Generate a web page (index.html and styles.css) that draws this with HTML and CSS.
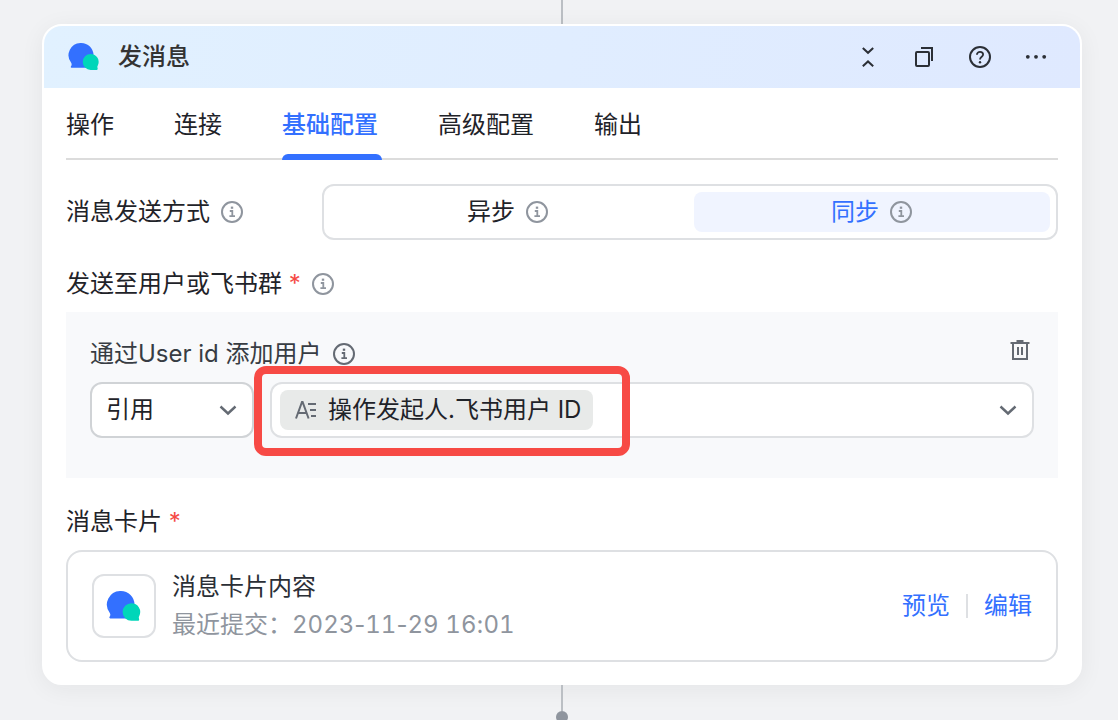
FILE: index.html
```html
<!DOCTYPE html>
<html lang="zh-CN">

<head>
  <meta charset="UTF-8">
  <meta name="viewport" content="width=device-width, initial-scale=1">
  <title>发消息</title>
  <link rel="stylesheet" href="styles.css">
</head>

<body>
  <!-- shared icons -->
  <svg class="sprite" aria-hidden="true">
    <symbol id="logo" viewBox="0 0 32 28">
      <path fill="#3370ff" d="M13.2 0A12.3 12.3 0 0 1 25.5 12.3V24.8H3.6C2.7 24.8 2.5 24 3 23.3C3.7 22.4 3.9 21.4 3.3 20A12.3 12.3 0 0 1 13.2 0Z" />
      <path fill="#00d6b9" d="M22.7 11A8 8 0 0 1 29.8 22.6C29.2 23.7 29.3 24.3 29.6 25.2C29.9 26.1 29.5 26.9 28.7 26.9H22.7A7.9 7.9 0 0 1 22.7 11Z" />
    </symbol>
    <symbol id="info" viewBox="0 0 24 24">
      <g fill="none" stroke="currentColor" stroke-width="2">
        <circle cx="12" cy="12" r="10" />
        <path d="M9.8 11H12.3V16.2M9.4 16.2H15" stroke-width="1.8" />
      </g>
      <rect x="10.8" y="6.6" width="2.4" height="2.2" fill="currentColor" />
    </symbol>
    <symbol id="chevron" viewBox="0 0 24 24">
      <path d="M4.5 8.5L12 15.5L19.5 8.5" fill="none" stroke="currentColor" stroke-width="2.4" />
    </symbol>
  </svg>

  <main class="canvas">
    <div class="line line-in"></div>
    <section class="node">
      <header class="node-header">
        <svg class="logo"><use href="#logo" /></svg>
        <h1>发消息</h1>
        <div class="actions">
          <button type="button" aria-label="收起">
            <svg viewBox="0 0 24 24" fill="none" stroke="currentColor" stroke-width="2">
              <path d="M6.8 3L12 7.8L17.2 3M6.8 21.2L12 16.4L17.2 21.2" />
            </svg>
          </button>
          <button type="button" aria-label="复制">
            <svg viewBox="0 0 24 24" fill="none" stroke="currentColor" stroke-width="2">
              <rect x="4" y="7" width="13" height="14" rx="1" />
              <path d="M9 3H20V16" />
            </svg>
          </button>
          <button type="button" aria-label="帮助">
            <svg viewBox="0 0 24 24" fill="none" stroke="currentColor" stroke-width="2">
              <circle cx="12" cy="12" r="10" />
              <path d="M8.9 9.8C8.9 5.8 15.1 6 15.1 9.6C15.1 11.8 12 11.8 12 14.6" stroke-width="1.8" />
              <circle cx="12" cy="17.2" r="1.2" fill="currentColor" stroke="none" />
            </svg>
          </button>
          <button type="button" aria-label="更多">
            <svg viewBox="0 0 24 24" fill="currentColor">
              <circle cx="3.8" cy="11.8" r="1.9" />
              <circle cx="12" cy="11.8" r="1.9" />
              <circle cx="20.2" cy="11.8" r="1.9" />
            </svg>
          </button>
        </div>
      </header>

      <div class="node-body">
        <div class="tabs" role="tablist">
          <button type="button" role="tab">操作</button>
          <button type="button" role="tab">连接</button>
          <button type="button" role="tab" class="active" aria-selected="true">基础配置</button>
          <button type="button" role="tab">高级配置</button>
          <button type="button" role="tab">输出</button>
        </div>

        <div class="mode-row">
          <div class="field-label" id="mode-label">消息发送方式 <svg class="icon"><use href="#info" /></svg></div>
          <div class="segmented" role="radiogroup" aria-labelledby="mode-label">
            <input type="radio" name="mode" id="mode-async">
            <label for="mode-async">异步 <svg class="icon"><use href="#info" /></svg></label>
            <input type="radio" name="mode" id="mode-sync" checked>
            <label for="mode-sync">同步 <svg class="icon"><use href="#info" /></svg></label>
          </div>
        </div>

        <div class="field-label">
          <span>发送至用户或飞书群 <span class="required">*</span></span>
          <svg class="icon"><use href="#info" /></svg>
        </div>
        <div class="panel">
          <div class="panel-top">
            <label class="panel-label" for="source">通过User id 添加用户 <svg class="icon"><use href="#info" /></svg></label>
            <button type="button" class="delete" aria-label="删除">
              <svg viewBox="0 0 24 24" fill="none" stroke="currentColor" stroke-width="2">
                <path d="M2.5 5H21.5M5 5V21H19V5M10 9V17M14 9V17" />
                <path d="M8.5 3.2H15.5" stroke-width="2.4" />
              </svg>
            </button>
          </div>
          <div class="panel-inputs">
            <div class="select">
              <select id="source">
                <option>引用</option>
              </select>
              <svg class="chevron"><use href="#chevron" /></svg>
            </div>
            <div class="value">
              <button type="button" class="picker" aria-haspopup="listbox">
                <span class="tag">
                  <svg viewBox="0 0 24 24" fill="none" stroke="currentColor" stroke-width="2">
                    <path d="M2 20.5L8 4H8.6L14.6 20.5M4.2 15H12.4M14 6H22M16 12H22M17 18H22" />
                  </svg>
                  操作发起人.飞书用户 ID
                </span>
                <svg class="chevron"><use href="#chevron" /></svg>
              </button>
              <div class="highlight"></div>
            </div>
          </div>
        </div>

        <div class="field-label"><span>消息卡片 <span class="required">*</span></span></div>
        <div class="message-card">
          <div class="thumb"><svg><use href="#logo" /></svg></div>
          <div class="message-info">
            <p>消息卡片内容</p>
            <p class="time">最近提交：<span class="num">2023</span>-<span class="num">11</span>-<span class="num">29</span> <span class="num">16</span>:<span class="num">01</span></p>
          </div>
          <div class="links">
            <a href="#">预览</a>
            <span class="divider"></span>
            <a href="#">编辑</a>
          </div>
        </div>
      </div>
    </section>
    <div class="line line-out"></div>
    <div class="dot"></div>
  </main>
</body>

</html>
```
FILE: styles.css
```css
* {
  box-sizing: border-box;
}

body {
  margin: 0;
  background-color: #f1f2f4;
  color: #1f2329;
  font-family: Inter, "Noto Sans CJK SC", sans-serif;
  font-size: 24px;
  line-height: 40px;
}

h1,
p {
  margin: 0;
}

button,
select {
  padding: 0;
  border: none;
  background: none;
  color: inherit;
  font: inherit;
  cursor: pointer;
}

svg {
  display: block;
  flex-shrink: 0;
}

.sprite {
  position: absolute;
  width: 0;
  height: 0;
}

.canvas {
  display: flex;
  flex-direction: column;
  align-items: center;
  height: 100vh;
  padding: 0 36px 0 42px;
  overflow: hidden;
}

.line {
  flex-shrink: 0;
  width: 2px;
  background-color: #bbbfc4;
}

.line-in {
  height: 24px;
}

.line-out {
  height: 26px;
}

.dot {
  flex-shrink: 0;
  width: 12px;
  height: 12px;
  border-radius: 50%;
  background-color: #8f959e;
}

.node {
  flex-shrink: 0;
  width: 100%;
  border: 2px solid #ffffff;
  border-radius: 20px;
  background-color: #ffffff;
  box-shadow: 0 4px 24px rgba(31, 35, 41, 0.06);
}

.node-header {
  display: flex;
  align-items: center;
  height: 62px;
  padding: 0 32px 0 24px;
  border-radius: 18px 18px 0 0;
  background: linear-gradient(100deg, #e1f1ff, #dfe9ff);
}

.logo {
  width: 32px;
  height: 28px;
}

.node-header h1 {
  margin-left: 18px;
  color: #333333;
  font-size: 24px;
  font-weight: 500;
}

.actions {
  display: flex;
  gap: 32px;
  margin-left: auto;
  color: #2b2f36;
}

.actions svg,
.icon,
.chevron,
.delete svg,
.tag svg {
  width: 24px;
  height: 24px;
}

.node-body {
  padding: 0 22px 21px;
}

.tabs {
  display: flex;
  gap: 60px;
  margin-bottom: 24px;
  box-shadow: inset 0 -2px #dcdcdc;
}

.tabs button {
  position: relative;
  padding: 17px 0 15px;
}

.tabs .active {
  color: #3370ff;
  font-weight: 500;
}

.tabs .active::after {
  content: "";
  position: absolute;
  bottom: 0;
  left: 0;
  right: -4px;
  height: 6px;
  border-radius: 6px 6px 0 0;
  background-color: #3370ff;
}

.mode-row {
  display: flex;
  align-items: center;
  margin-bottom: 24px;
}

.mode-row .field-label {
  width: 256px;
  margin: 0;
}

.field-label,
.panel-label {
  display: flex;
  align-items: center;
  gap: 10px;
}

.field-label {
  margin-bottom: 8px;
}

.icon {
  color: #8f959e;
}

.required {
  color: #f54a45;
}

.segmented {
  display: flex;
  flex: 1;
  gap: 8px;
  padding: 6px;
  border: 2px solid #dee0e3;
  border-radius: 12px;
}

.segmented input {
  position: absolute;
  opacity: 0;
  pointer-events: none;
}

.segmented label {
  display: flex;
  flex: 1;
  align-items: center;
  justify-content: center;
  gap: 10px;
  border-radius: 8px;
  cursor: pointer;
}

.segmented input:checked + label {
  background-color: #f0f4ff;
  color: #3370ff;
}

.panel {
  margin-bottom: 24px;
  padding: 22px 24px 40px;
  background-color: #f8f9fb;
}

.panel-top {
  display: flex;
  align-items: flex-start;
  justify-content: space-between;
  margin-bottom: 8px;
}

.panel-label {
  color: #373c43;
}

.panel-label .icon,
.chevron,
.delete,
.tag svg {
  color: #646a73;
}

.delete {
  display: flex;
  align-items: center;
  justify-content: center;
  width: 28px;
  height: 32px;
}

.panel-inputs {
  display: flex;
  gap: 16px;
}

.select {
  position: relative;
  width: 164px;
}

.select select,
.picker {
  width: 100%;
  height: 56px;
  border: 2px solid #d0d3d6;
  border-radius: 12px;
  background-color: #ffffff;
}

.select select {
  padding: 0 14px;
  appearance: none;
}

.select .chevron {
  position: absolute;
  top: 16px;
  right: 14px;
  pointer-events: none;
}

.value {
  position: relative;
  flex: 1;
}

.picker {
  display: flex;
  align-items: center;
  justify-content: space-between;
  padding: 0 12px 0 8px;
  border-color: #dee0e3;
}

.tag {
  display: flex;
  align-items: center;
  gap: 10px;
  padding: 0 12px 0 14px;
  border-radius: 8px;
  background-color: #e8eae9;
}

/* red frame around the reference value */
.highlight {
  position: absolute;
  top: -16px;
  left: -16px;
  width: 376px;
  height: 90px;
  border: 8px solid #f74a45;
  border-radius: 12px;
  pointer-events: none;
}

.message-card {
  display: flex;
  align-items: center;
  gap: 16px;
  padding: 16px 24px;
  border: 2px solid #dee0e3;
  border-radius: 16px;
}

.thumb {
  display: flex;
  align-items: center;
  justify-content: center;
  width: 64px;
  height: 64px;
  border: 2px solid #dee0e3;
  border-radius: 12px;
}

.thumb svg {
  width: 36px;
  height: 31px;
}

.message-info {
  color: #2b2f36;
  line-height: 38px;
}

.time {
  color: #8f959e;
}

.num {
  font-variant-numeric: tabular-nums;
}

.links {
  display: flex;
  align-items: center;
  gap: 16px;
  margin-left: auto;
}

.links a {
  color: #3370ff;
  text-decoration: none;
}

.divider {
  width: 2px;
  height: 24px;
  background-color: #dee0e3;
}
```
